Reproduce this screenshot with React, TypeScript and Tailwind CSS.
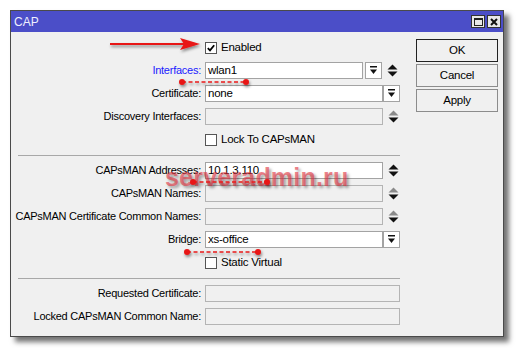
import React from "react";

function DropBtn() {
  return (
    <div className="flex h-[17px] w-[17px] items-center justify-center border border-[#a3a3a3] bg-white">
      <svg width="9" height="9" viewBox="0 0 9 9">
        <rect x="1" y="0" width="7" height="1.5" fill="#111" />
        <path d="M1 3.5 H8 L4.5 8 Z" fill="#111" />
      </svg>
    </div>
  );
}

function UpDown({ upOff }: { upOff?: boolean }) {
  return (
    <svg width="11" height="13" viewBox="0 0 11 13" className="ml-[5px]">
      <path d="M0.5 5.5 L5.5 0.5 L10.5 5.5 Z" fill={upOff ? "#8a8a8a" : "#111"} />
      <path d="M0.5 7.5 L10.5 7.5 L5.5 12.5 Z" fill="#111" />
    </svg>
  );
}

function Input({ w, value, off }: { w: number; value?: string; off?: boolean }) {
  return (
    <div
      className={`flex h-[17px] items-center border px-[2px] text-[11.5px] leading-none ${
        off ? "border-[#b4b4b4] bg-[#f0f0f0]" : "border-[#a3a3a3] bg-white"
      }`}
      style={{ width: w }}
    >
      {value}
    </div>
  );
}

function Check({ on, label }: { on?: boolean; label: string }) {
  return (
    <div className="flex items-center">
      <div className="flex h-[12px] w-[12px] items-center justify-center border border-[#555] bg-white">
        {on && (
          <svg width="8" height="8" viewBox="0 0 8 8">
            <path d="M0.8 4.2 L3 6.4 L7.2 1.2" stroke="#000" strokeWidth="1.8" fill="none" />
          </svg>
        )}
      </div>
      <span className="ml-[4px] text-[11.5px]">{label}</span>
    </div>
  );
}

function Row({ label, blue, children }: { label?: string; blue?: boolean; children: React.ReactNode }) {
  return (
    <div className="flex h-[23px] items-center">
      <div
        className={`flex w-[190px] justify-end whitespace-nowrap ${blue ? "text-[#1a1aff]" : "text-black"}`}
      >
        {label}
      </div>
      <div className="ml-[4px] flex items-center">{children}</div>
    </div>
  );
}

function Sep() {
  return (
    <div className="flex h-[8px] items-center pl-[7px]">
      <div className="h-px w-[382px] bg-[#a8a8a8]" />
    </div>
  );
}

function Btn({ label, def }: { label: string; def?: boolean }) {
  return (
    <div
      className={`flex h-[23px] w-[82px] items-center justify-center border bg-[#f0f0f0] text-[11.5px] ${
        def ? "border-[#222]" : "border-[#8c8c8c]"
      }`}
    >
      {label}
    </div>
  );
}

export default function App() {
  return (
    <div className="relative h-[348px] w-[516px] overflow-hidden bg-white pl-[10px] pt-[10px] font-['Liberation_Sans',Arial,sans-serif] text-[11px] tracking-[-0.25px] text-black">
      <div className="h-[327px] w-[494px] border border-[#4a4a4a] bg-[#f0f0f0] shadow-[5px_5px_5px_rgba(0,0,0,0.55)]">
        {/* Title bar */}
        <div className="flex h-[21px] items-center bg-[#4b4ec8] pl-[3px] pr-[2px]">
          <span className="text-[12px] tracking-normal text-[#eef0ff]">CAP</span>
          <div className="ml-auto flex items-center gap-[2px]">
            <div className="flex h-[13px] w-[14px] items-center justify-center border border-[#333] bg-[#e8e8e8]">
              <div className="h-[8px] w-[9px] border border-t-2 border-[#222]" />
            </div>
            <div className="flex h-[13px] w-[14px] items-center justify-center border border-[#333] bg-[#e8e8e8]">
              <svg width="8" height="8" viewBox="0 0 8 8">
                <path d="M1 1 L7 7 M7 1 L1 7" stroke="#111" strokeWidth="2" />
              </svg>
            </div>
          </div>
        </div>

        {/* Body */}
        <div className="flex">
          <div className="w-[395px] pt-[4px]">
            <Row>
              <Check on label="Enabled" />
            </Row>
            <Row label="Interfaces:" blue>
              <Input w={158} value="wlan1" />
              <div className="ml-[2px]">
                <DropBtn />
              </div>
              <UpDown />
            </Row>
            <Row label="Certificate:">
              <Input w={178} value="none" />
              <DropBtn />
            </Row>
            <Row label="Discovery Interfaces:">
              <Input w={178} off />
              <UpDown upOff />
            </Row>
            <Row>
              <Check label="Lock To CAPsMAN" />
            </Row>
            <Sep />
            <Row label="CAPsMAN Addresses:">
              <Input w={178} value="10.1.3.110" />
              <UpDown />
            </Row>
            <Row label="CAPsMAN Names:">
              <Input w={178} off />
              <UpDown upOff />
            </Row>
            <Row label="CAPsMAN Certificate Common Names:">
              <Input w={178} off />
              <UpDown upOff />
            </Row>
            <Row label="Bridge:">
              <Input w={178} value="xs-office" />
              <DropBtn />
            </Row>
            <Row>
              <Check label="Static Virtual" />
            </Row>
            <Sep />
            <Row label="Requested Certificate:">
              <Input w={195} off />
            </Row>
            <Row label="Locked CAPsMAN Common Name:">
              <Input w={195} off />
            </Row>
          </div>
          <div className="ml-[10px] flex flex-col gap-[2px] pt-[7px]">
            <Btn label="OK" def />
            <Btn label="Cancel" />
            <Btn label="Apply" />
          </div>
        </div>
      </div>

      {/* Annotations */}
      <div className="pointer-events-none absolute left-[165px] top-[159px] text-[25px] font-bold tracking-[0.2px] text-[rgba(228,50,62,0.6)] [text-shadow:2px_2px_3px_rgba(0,0,0,0.35)]">
        serveradmin.ru
      </div>
      <svg className="pointer-events-none absolute left-0 top-0" width="516" height="348">
        <defs>
          <filter id="sh" x="-10%" y="-50%" width="130%" height="250%">
            <feDropShadow dx="1" dy="2" stdDeviation="1.5" floodColor="#000" floodOpacity="0.45" />
          </filter>
        </defs>
        <g filter="url(#sh)">
          <line x1="110" y1="44" x2="184" y2="44" stroke="#e81818" strokeWidth="2" />
          <path d="M180 38 L200 44 L180 50 L184 44 Z" fill="#e81818" />
        </g>
        <g filter="url(#sh)" fill="#e81818" stroke="#e81818">
          <line x1="182" y1="82" x2="246" y2="82" strokeWidth="1.6" strokeDasharray="4 2.5" />
          <circle cx="182" cy="82" r="3" stroke="none" />
          <circle cx="246" cy="82" r="3" stroke="none" />
          <line x1="193" y1="182" x2="267" y2="182" strokeWidth="1.6" strokeDasharray="4 2.5" />
          <circle cx="193" cy="182" r="3" stroke="none" />
          <circle cx="267" cy="182" r="3" stroke="none" />
          <line x1="187" y1="252" x2="258" y2="252" strokeWidth="1.6" strokeDasharray="4 2.5" />
          <circle cx="187" cy="252" r="3" stroke="none" />
          <circle cx="258" cy="252" r="3" stroke="none" />
        </g>
      </svg>
    </div>
  );
}
